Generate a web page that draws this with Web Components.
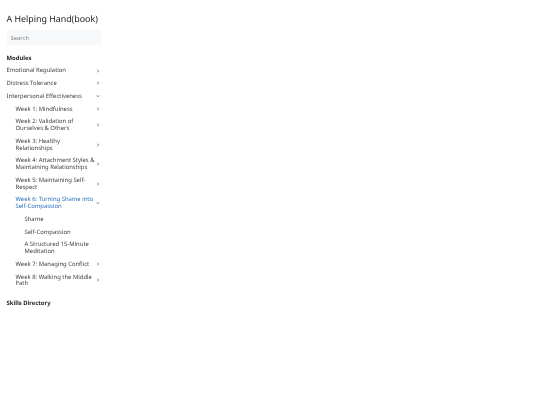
<!DOCTYPE html>
<html>
<head>
<meta charset="utf-8">
<style>
  html, body { margin: 0; background: #fff; }
  body { font-family: "Noto Sans", sans-serif; color: #1c1e21; text-rendering: geometricPrecision; }
</style>
</head>
<body>
<book-sidebar>
  <nav-heading>Modules</nav-heading>
  <nav-item arrow="right">Emotional Regulation</nav-item>
  <nav-item arrow="right">Distress Tolerance</nav-item>
  <nav-item arrow="down">Interpersonal Effectiveness
    <nav-item slot="children" arrow="right">Week 1: Mindfulness</nav-item>
    <nav-item slot="children" arrow="right">Week 2: Validation of Ourselves &amp; Others</nav-item>
    <nav-item slot="children" arrow="right">Week 3: Healthy Relationships</nav-item>
    <nav-item slot="children" arrow="right">Week 4: Attachment Styles &amp; Maintaining Relationships</nav-item>
    <nav-item slot="children" arrow="right">Week 5: Maintaining Self-Respect</nav-item>
    <nav-item slot="children" arrow="down" active>Week 6: Turning Shame into Self-Compassion
      <nav-item slot="children">Shame</nav-item>
      <nav-item slot="children">Self-Compassion</nav-item>
      <nav-item slot="children">A Structured 15-Minute Meditation</nav-item>
    </nav-item>
    <nav-item slot="children" arrow="right">Week 7: Managing Conflict</nav-item>
    <nav-item slot="children" arrow="right">Week 8: Walking the Middle Path</nav-item>
  </nav-item>
  <nav-heading class="skills">Skills Directory</nav-heading>
</book-sidebar>
<script>
class BookSidebar extends HTMLElement {
  constructor() {
    super();
    this.attachShadow({ mode: 'open' });
  }
  connectedCallback() {
    this.shadowRoot.innerHTML = `
      <style>
        :host { display: block; width: 94.5px; padding: 12.5px 0 0 6.5px; filter: blur(.2px); }
        h1 { margin: 0; font-size: 8.85px; line-height: 13px; font-weight: 400; color: #1c1e21; white-space: nowrap; }
        input {
          display: block; box-sizing: border-box; width: 100%; height: 15px;
          margin: 4.5px 0 0; padding: 0 4px; border: 0; border-radius: 2px;
          background: #f7f8f9; font: 400 5.9px "Noto Sans", sans-serif; color: #606770;
        }
        input::placeholder { color: #80858c; opacity: 1; }
        .list { margin-top: 6.5px; }
      </style>
      <h1>A Helping Hand(book)</h1>
      <input type="text" placeholder="Search">
      <div class="list"><slot></slot></div>
    `;
  }
}

class NavHeading extends HTMLElement {
  constructor() {
    super();
    this.attachShadow({ mode: 'open' });
  }
  connectedCallback() {
    const gap = this.classList.contains('skills') ? '7px' : '0';
    this.shadowRoot.innerHTML = `
      <style>
        :host { display: block; margin-top: ${gap}; padding: 3px 0; font-size: 5.9px; line-height: 6.75px; font-weight: 700; color: #1c1e21; }
      </style>
      <slot></slot>
    `;
  }
}

class NavItem extends HTMLElement {
  constructor() {
    super();
    this.attachShadow({ mode: 'open' });
  }
  connectedCallback() {
    const arrow = this.getAttribute('arrow');
    const paths = { right: 'M2.4 1.7l1.3 1.3-1.3 1.3', down: 'M1.7 2.4l1.3 1.3 1.3-1.3' };
    const icon = arrow
      ? `<svg width="6" height="6" viewBox="0 0 6 6"><path d="${paths[arrow]}" fill="none" stroke="#444950" stroke-width=".7"/></svg>`
      : '';
    this.shadowRoot.innerHTML = `
      <style>
        :host { display: block; font-size: 5.9px; line-height: 6.75px; color: #3d4046; }
        .row { display: flex; align-items: center; justify-content: space-between; gap: 0; padding: 3px 0; }
        :host([active]) > .row { color: #2a6fb8; }
        .label { flex: 1; min-width: 0; }
        svg { flex: none; }
        .kids { padding-left: 9px; color: #3d4046; }
      </style>
      <div class="row"><span class="label"><slot></slot></span>${icon}</div>
      <div class="kids"><slot name="children"></slot></div>
    `;
  }
}

customElements.define('book-sidebar', BookSidebar);
customElements.define('nav-heading', NavHeading);
customElements.define('nav-item', NavItem);
</script>
</body>
</html>
